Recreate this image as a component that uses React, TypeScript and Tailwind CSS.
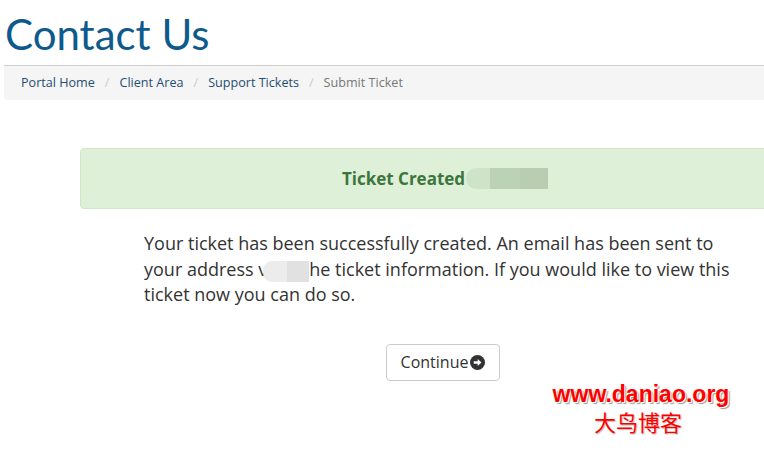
import React from 'react';

const crumbs = ['Portal Home', 'Client Area', 'Support Tickets'];

const ArrowCircle: React.FC = () => (
  <svg width="15" height="15" viewBox="0 0 16 16" className="inline-block ml-[2px] align-[-2px]">
    <circle cx="8" cy="8" r="8" fill="#333" />
    <path d="M4 6.7h4.2V4.2L12.2 8l-4 3.8V9.3H4z" fill="#fff" />
  </svg>
);

const App: React.FC = () => {
  return (
    <div className="relative w-full h-[454px] overflow-hidden bg-white" style={{ fontFamily: '"Open Sans", sans-serif' }}>
      <h1
        className="pl-[5px] pt-[10px] text-[42px] leading-[48px] font-normal text-[#0e5a8c]"
        style={{ fontFamily: 'Lato, sans-serif' }}
      >
        Contact Us
      </h1>

      {/* Breadcrumb */}
      <div className="ml-[4px] mt-[7px] h-[35px] border-t border-[#cfcfcf] bg-[#f5f5f5] rounded-bl-[4px] flex items-center pl-[17px] text-[12.6px] text-[#1f4d72]">
        {crumbs.map((c) => (
          <React.Fragment key={c}>
            <span>{c}</span>
            <span className="px-[10px] text-[#cccccc]">/</span>
          </React.Fragment>
        ))}
        <span className="text-[#777]">Submit Ticket</span>
      </div>

      {/* Success alert */}
      <div className="ml-[80px] mt-[48px] w-[730px] h-[61px] bg-[#dff0d8] border border-[#d3e7c5] rounded-[4px] flex items-center justify-center text-[17px] font-bold text-[#3c763d]">
        <span>Ticket Created</span>
        <span className="inline-flex h-[21px] ml-[1px]">
          <span className="w-[24px] h-full bg-[#cfe3c8] rounded-l-[10px]" />
          <span className="w-[30px] h-full bg-[#bcd2b4]" />
          <span className="w-[28px] h-full bg-[#b9cdb1]" />
        </span>
      </div>

      <div className="ml-[144px] w-[598px]">
        <p className="mt-[22px] w-[592px] text-[18px] leading-[25.5px] text-[#333]">
          Your ticket has been successfully created. An email has been sent to your address v
          <span className="inline-flex h-[21px] align-[-6px] -ml-[4px]">
            <span className="w-[24px] h-full bg-[#ececec] rounded-l-[9px]" />
            <span className="w-[22px] h-full bg-[#e1e1e1]" />
          </span>
          he ticket information. If you would like to view this ticket now you can do so.
        </p>

        <div className="mt-[36px] flex justify-center">
          <button className="h-[37px] px-[14px] border border-[#cccccc] rounded-[4px] bg-white text-[16px] text-[#333] flex items-center">
            Continue
            <ArrowCircle />
          </button>
        </div>
      </div>

      {/* Watermark */}
      <div className="absolute left-[549px] top-[381px] flex flex-col items-center w-[184px]">
        <span
          className="text-[23px] leading-[27px] font-bold text-[#ff0000]"
          style={{ fontFamily: '"Liberation Sans", Arial, sans-serif', textShadow: '1px 1px 0 #fff, 2px 2px 1px #999' }}
        >
          www.daniao.org
        </span>
        <span
          className="-ml-[6px] text-[22px] leading-[26px] text-[#ff0000]"
          style={{ fontFamily: '"Noto Sans CJK SC", sans-serif', textShadow: '1px 1px 1px #bbb' }}
        >
          大鸟博客
        </span>
      </div>
    </div>
  );
};

export default App;
